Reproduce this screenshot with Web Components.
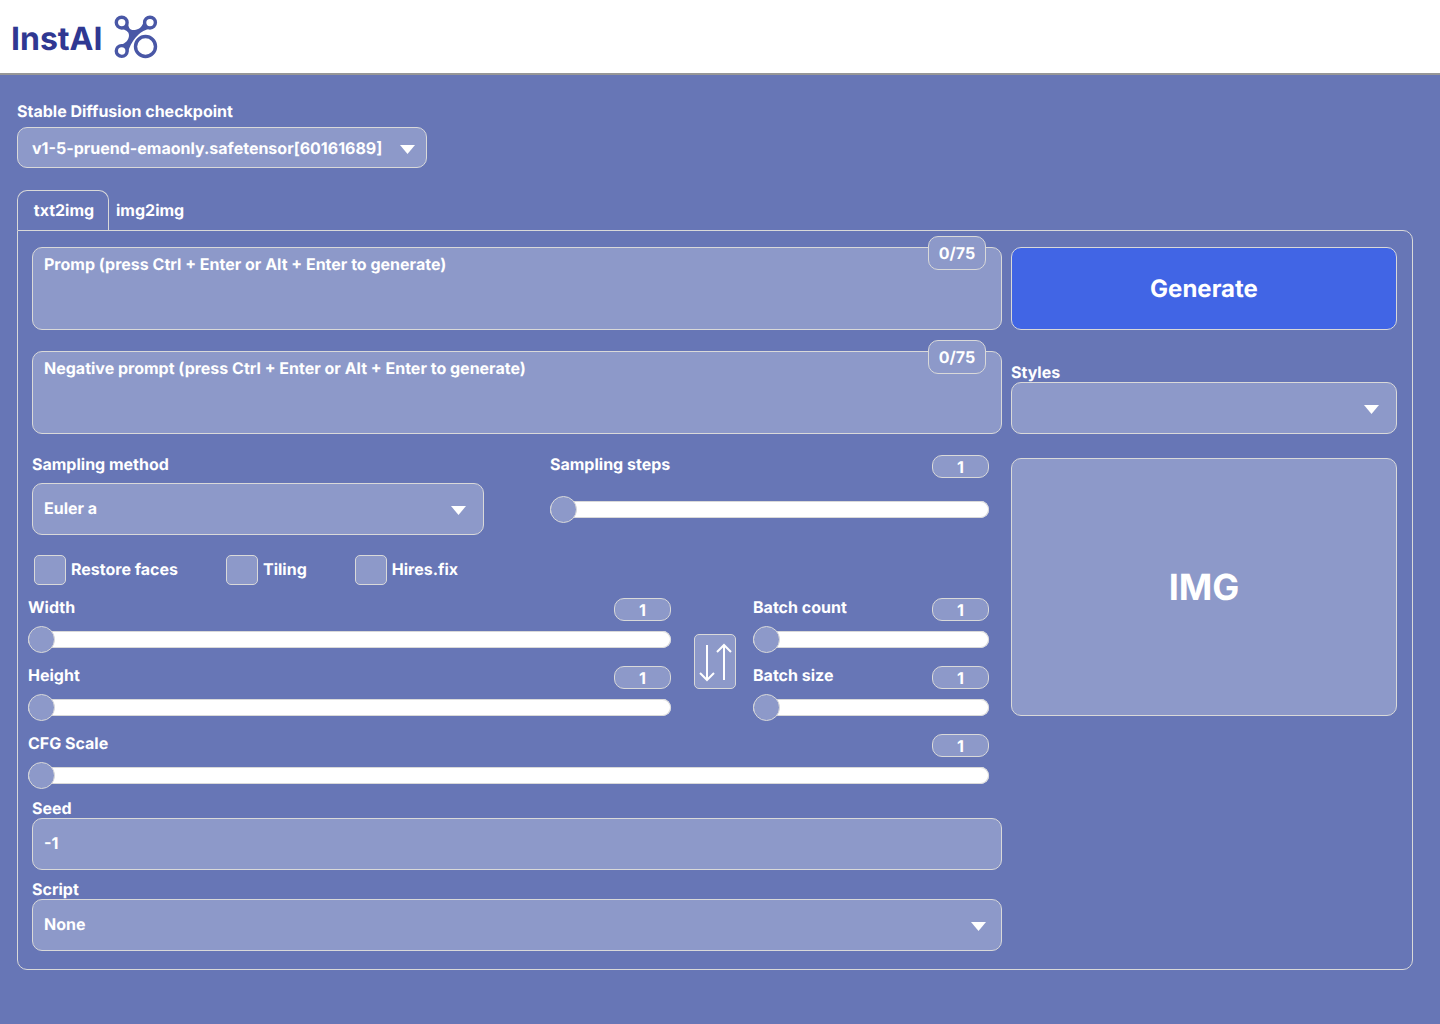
<!DOCTYPE html>
<html lang="en">
<head>
<meta charset="utf-8">
<meta name="viewport" content="width=device-width, initial-scale=1">
<title>InstAI</title>
<style>
  :root {
    --page: #6776b6;
    --field: #8d99c9;
    --line: #d9d9d9;
    --accent: #4165e5;
    --brand: #2f3892;
    --brand-soft: #4957a6;
  }
  body {
    margin: 0;
    min-height: 100vh;
    background: var(--page);
    color: #fff;
    font: 700 16px/20px Inter, sans-serif;
    font-optical-sizing: none;
    text-rendering: geometricPrecision;
  }
</style>
</head>
<body>
<insta-app></insta-app>
<script>
const base = `
  *, *::before, *::after { box-sizing: border-box; }
  button, input, select, textarea { margin: 0; font: inherit; font-optical-sizing: inherit; color: inherit; text-rendering: inherit; }
  :focus-visible { outline: 2px solid #fff; outline-offset: 2px; }
`;

function define(name, markup, setup) {
  const template = document.createElement('template');
  template.innerHTML = markup;
  customElements.define(name, class extends HTMLElement {
    constructor() {
      super();
      this.attachShadow({ mode: 'open' }).append(template.content.cloneNode(true));
    }
    connectedCallback() {
      if (setup && !this.ready) { this.ready = true; setup(this, this.shadowRoot); }
    }
  });
}

define('insta-header', `
  <style>${base}
    :host { display: block; background: #fff; border-bottom: 2px solid #979797; }
    header { display: flex; align-items: center; gap: 12px; height: 73px; padding: 0 11px; }
    h1 { margin: 0; padding-top: 4px; font-size: 32px; line-height: 40px; font-weight: 700; color: var(--brand); }
    svg { display: block; color: var(--brand-soft); }
  </style>
  <header>
    <h1>InstAI</h1>
    <svg width="44" height="44" viewBox="0 0 44 44" fill="none" stroke="currentColor" aria-hidden="true">
      <path d="M14 5 C14 10 14.500 13.500 17.500 14.700 Q19.500 15.300 22 14.700 C26 13.500 28.500 12 30 5 L37 13.500 C31 14.500 27 17 24.300 19.800 C20 24 18 27.500 16.700 30 Q15 33 14 38 L6 30 C12 28.500 15 24.500 15 20 Q15 15 6 13.800 Z" fill="currentColor" stroke="none"/>
      <g fill="#fff" stroke-width="3.400">
        <circle cx="7.700" cy="7.600" r="5.400"/><circle cx="36" cy="7.600" r="5.400"/><circle cx="7.700" cy="36" r="5.400"/>
        <circle cx="31.500" cy="31.500" r="10"/>
      </g>
    </svg>
  </header>`);

define('insta-select', `
  <style>${base}
    :host { display: grid; gap: var(--label-gap, 0px); }
    .box { display: grid; align-items: center; }
    .box > * { grid-area: 1 / 1; }
    select { appearance: none; width: 100%; height: var(--box-height, 52px); padding: 0 40px var(--text-lift, 2px) var(--text-inset, 11px);
      border: 1px solid var(--line); border-radius: 10px; background: var(--field); }
    option { color: #222; }
    svg { display: block; justify-self: end; margin: 3px var(--arrow-inset, 18px) 0 0; pointer-events: none; }
  </style>
  <label for="control"></label>
  <div class="box">
    <select id="control"></select>
    <svg width="15" height="9" viewBox="0 0 15 9" aria-hidden="true"><path d="M0 0H15L7.500 9Z" fill="#fff"/></svg>
  </div>`, (host, root) => {
  root.querySelector('label').textContent = host.getAttribute('label');
  root.querySelector('select').add(new Option(host.getAttribute('value') || ''));
});

define('insta-prompt', `
  <style>${base}
    :host { display: block; position: relative; }
    textarea { display: block; width: 100%; height: 83px; padding: 6px 80px 6px 11px; resize: none;
      border: 1px solid var(--line); border-radius: 10px; background: var(--field); }
    textarea::placeholder { color: #fff; opacity: 1; }
    output { position: absolute; top: -11px; right: 16px; width: 58px; height: 34px; text-align: center; line-height: 32px;
      border: 1px solid var(--line); border-radius: 10px; background: var(--field); }
  </style>
  <textarea></textarea>
  <output>0/75</output>`, (host, root) => {
  const area = root.querySelector('textarea');
  area.placeholder = host.getAttribute('hint');
  area.setAttribute('aria-label', host.getAttribute('hint'));
  area.addEventListener('input', () => {
    const words = area.value.trim();
    root.querySelector('output').textContent = (words ? words.split(/\s+/).length : 0) + '/75';
  });
});

define('insta-slider', `
  <style>${base}
    :host { display: grid; gap: var(--track-gap, 5px); align-content: start; }
    .head { display: flex; justify-content: space-between; height: 24px; }
    output { align-self: flex-end; width: 57px; height: 23px; line-height: 23px; text-align: center;
      border: 1px solid var(--line); border-radius: 10px; background: var(--field); }
    input { appearance: none; display: block; width: 100%; height: 27px; background: none; }
    input::-webkit-slider-runnable-track { height: 17px; border-radius: 10px; background: #fff; box-shadow: inset 0 0 0 1px var(--line); }
    input::-webkit-slider-thumb { appearance: none; width: 27px; height: 27px; margin-top: -5px;
      border: 1px solid var(--line); border-radius: 50%; background: var(--field); }
  </style>
  <div class="head"><label for="control"></label><output for="control">1</output></div>
  <input id="control" type="range" min="1" max="100" value="1">`, (host, root) => {
  root.querySelector('label').textContent = host.getAttribute('label');
  const input = root.querySelector('input');
  input.addEventListener('input', () => { root.querySelector('output').textContent = input.value; });
});

define('insta-check', `
  <style>${base}
    :host { display: block; }
    label { display: flex; align-items: center; gap: 5px; }
    input { appearance: none; width: 32px; height: 30px; border: 1px solid var(--line); border-radius: 5px; background: var(--field); }
    input:checked { background: var(--accent); }
    span { padding-bottom: 2px; }
  </style>
  <label><input type="checkbox"><span><slot></slot></span></label>`);

define('insta-text', `
  <style>${base}
    :host { display: grid; }
    input { width: 100%; height: 52px; padding: 0 11px 2px; border: 1px solid var(--line); border-radius: 10px; background: var(--field); }
  </style>
  <label for="control"></label>
  <input id="control" type="text">`, (host, root) => {
  root.querySelector('label').textContent = host.getAttribute('label');
  root.querySelector('input').value = host.getAttribute('value');
});

define('insta-swap', `
  <style>${base}
    :host { display: block; }
    button { display: block; width: 42px; height: 55px; padding: 0; border: 1px solid var(--line); border-radius: 5px; background: var(--field); }
    svg { display: block; }
  </style>
  <button type="button" aria-label="Swap width and height">
    <svg width="40" height="53" viewBox="0 0 40 53" fill="none" stroke="#fff" stroke-width="2" aria-hidden="true">
      <path d="M12 10V45M5 38L12 45L19 38M29 45V10M22 17L29 10L36 17"/>
    </svg>
  </button>`);

define('insta-tabs', `
  <style>${base}
    :host { display: block; }
    [role=tablist] { display: flex; height: 40px; }
    button { padding: 0 7px; border: 0; background: none; }
    button[aria-selected=true] { width: 92px; padding: 0 0 1px 2px; border: 1px solid var(--line); border-bottom: 0; border-radius: 10px 10px 0 0; }
    section { padding: 16px 15px 18px 10px; border: 1px solid var(--line); border-radius: 0 10px 10px 10px; }
  </style>
  <div role="tablist">
    <button type="button" role="tab" aria-selected="true" aria-controls="panel">txt2img</button>
    <button type="button" role="tab" aria-selected="false" aria-controls="panel">img2img</button>
  </div>
  <section id="panel" role="tabpanel"><slot></slot></section>`);

define('insta-settings', `
  <style>${base}
    :host { display: grid; }
    .inset { padding-left: 4px; }
    .prompts { display: grid; gap: 21px; }
    .sampling { display: grid; grid-template-columns: minmax(0, 452fr) minmax(0, 439fr); gap: 66px; padding-right: 13px; margin-top: 20px; }
    .sampling insta-select { --label-gap: 9px; align-content: start; }
    .sampling insta-slider { --track-gap: 18px; }
    .checks { display: flex; flex-wrap: wrap; gap: 48px; padding-left: 6px; margin-top: 20px; }
    .sizes { display: grid; grid-template-columns: minmax(0, 643fr) auto minmax(0, 236fr); align-items: center; padding-right: 13px; margin-top: 12px; }
    .pair { display: grid; gap: 12px; }
    insta-swap { margin: 5px 17px 0 23px; }
    .scale { padding-right: 13px; margin-top: 12px; }
    .fields { display: grid; gap: 9px; margin-top: 9px; --arrow-inset: 16px; }
  </style>
  <div class="prompts inset">
    <insta-prompt hint="Promp (press Ctrl + Enter or Alt + Enter to generate)"></insta-prompt>
    <insta-prompt hint="Negative prompt (press Ctrl + Enter or Alt + Enter to generate)"></insta-prompt>
  </div>
  <div class="sampling inset">
    <insta-select label="Sampling method" value="Euler a"></insta-select>
    <insta-slider label="Sampling steps"></insta-slider>
  </div>
  <div class="checks">
    <insta-check>Restore faces</insta-check>
    <insta-check>Tiling</insta-check>
    <insta-check>Hires.fix</insta-check>
  </div>
  <div class="sizes">
    <div class="pair"><insta-slider label="Width"></insta-slider><insta-slider label="Height"></insta-slider></div>
    <insta-swap></insta-swap>
    <div class="pair"><insta-slider label="Batch count"></insta-slider><insta-slider label="Batch size"></insta-slider></div>
  </div>
  <div class="scale"><insta-slider label="CFG Scale"></insta-slider></div>
  <div class="fields inset">
    <insta-text label="Seed" value="-1"></insta-text>
    <insta-select label="Script" value="None"></insta-select>
  </div>`);

define('insta-output', `
  <style>${base}
    :host { display: grid; align-content: start; }
    button { height: 83px; border: 1px solid var(--line); border-radius: 10px; background: var(--accent); font-size: 24px; line-height: 30px; }
    insta-select { margin-top: 32px; }
    .preview { display: grid; place-items: center; height: 258px; margin-top: 24px; border: 1px solid var(--line); border-radius: 10px;
      background: var(--field); font-size: 36px; line-height: 44px; }
  </style>
  <button type="button">Generate</button>
  <insta-select label="Styles"></insta-select>
  <div class="preview">IMG</div>`);

define('insta-app', `
  <style>${base}
    :host { display: block; }
    main { padding: 26px 27px 54px 17px; }
    .checkpoint { max-width: 410px; --label-gap: 6px; --box-height: 41px; --text-inset: 14px; --text-lift: 0px; --arrow-inset: 12px; }
    insta-tabs { margin-top: 22px; }
    .columns { display: grid; grid-template-columns: minmax(0, 974fr) minmax(0, 386fr); gap: 9px; }
  </style>
  <insta-header></insta-header>
  <main>
    <insta-select class="checkpoint" label="Stable Diffusion checkpoint" value="v1-5-pruend-emaonly.safetensor[60161689]"></insta-select>
    <insta-tabs>
      <div class="columns">
        <insta-settings></insta-settings>
        <insta-output></insta-output>
      </div>
    </insta-tabs>
  </main>`);
</script>
</body>
</html>
